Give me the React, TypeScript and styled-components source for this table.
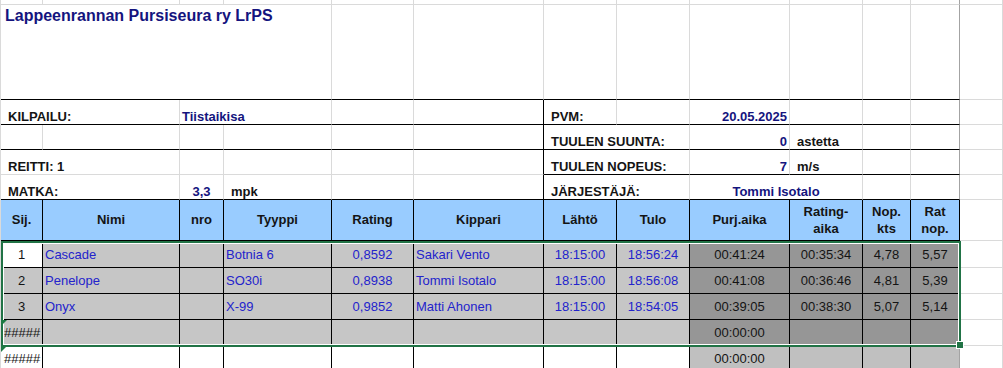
import React from "react";
import styled, { createGlobalStyle } from "styled-components";

const GlobalStyle = createGlobalStyle`
  html, body {
    margin: 0;
    padding: 0;
    background: #ffffff;
    overflow: hidden;
  }
  body {
    font-family: "Liberation Sans", Arial, sans-serif;
  }
`;

const GRID = "#dadada";
const BLACK = "#000000";
const EDGE = "#a3a3a3";
const NAVY = "#14147e";
const BLUE = "#2323cc";
const INK = "#141414";
const HEAD_BG = "#99ccff";
const SEL_LIGHT = "#c6c6c6";
const SEL_DARK = "#969696";
const CALC_BG = "#c0c0c0";
const EXCEL_GREEN = "#217346";

const Sheet = styled.div`
  position: relative;
  display: grid;
  grid-template-columns: 42px 137px 44px 108px 82px 130px 73px 73px 100px 73px 48px 49px 43px;
  grid-template-rows: 5px 95px 25px 25px 25px 25px 41px 27px 26px 26px 26px 26px;
  width: 1002px;
  border-left: 1px solid ${GRID};
  font-family: "Liberation Sans", Arial, sans-serif;
  font-size: 13px;
`;

type CellProps = {
  $span?: number;
  $bg?: string;
  $r?: string;
  $b?: string;
  $align?: "left" | "center" | "right";
  $v?: "top" | "center" | "bottom";
  $bold?: boolean;
  $color?: string;
  $indent?: number;
};

const justify = { left: "flex-start", center: "center", right: "flex-end" };
const valign = { top: "flex-start", center: "center", bottom: "flex-end" };

const Cell = styled.div<CellProps>`
  position: relative;
  grid-column: span ${(p) => p.$span ?? 1};
  box-sizing: border-box;
  min-width: 0;
  display: flex;
  justify-content: ${(p) => justify[p.$align ?? "left"]};
  align-items: ${(p) => valign[p.$v ?? "center"]};
  padding: 0 2px 0 ${(p) => p.$indent ?? 2}px;
  background: ${(p) => p.$bg ?? "#ffffff"};
  border-right: 1px solid ${(p) => p.$r ?? GRID};
  border-bottom: 1px solid ${(p) => p.$b ?? GRID};
  color: ${(p) => p.$color ?? INK};
  font-weight: ${(p) => (p.$bold ? 700 : 400)};
  line-height: 15px;
  white-space: nowrap;
`;

const Title = styled(Cell)`
  font-size: 16px;
  line-height: 18px;
  padding-top: 2px;
  padding-left: 4px;
  color: ${NAVY};
`;

const HeadCell = styled(Cell)`
  background: ${HEAD_BG};
  border-right-color: ${BLACK};
  border-bottom-color: ${BLACK};
  font-weight: 700;
  line-height: 16.5px;
  padding-top: 1px;
`;

const HeadText = styled.span`
  display: block;
  text-align: center;
`;

const ErrorMark = styled.span`
  position: absolute;
  left: 0;
  top: 0;
  z-index: 3;
  width: 0;
  height: 0;
  border-top: 6px solid #1e7a44;
  border-right: 6px solid transparent;
`;

const Selection = styled.div`
  position: absolute;
  z-index: 1;
  left: 0;
  top: 241px;
  width: 960px;
  height: 106px;
  box-sizing: border-box;
  border: 2px solid ${EXCEL_GREEN};
  box-shadow: inset 0 0 0 1px #ffffff;
  pointer-events: none;
`;

const FillHandle = styled.div`
  position: absolute;
  z-index: 2;
  left: 955px;
  top: 341px;
  width: 6px;
  height: 6px;
  background: ${EXCEL_GREEN};
  border: 1px solid #ffffff;
  pointer-events: none;
`;

type Row = {
  sij: string;
  nimi: string;
  tyyppi: string;
  rating: string;
  kippari: string;
  lahto: string;
  tulo: string;
  purj: string;
  ra: string;
  nop: string;
  rat: string;
  err?: boolean;
  selected: boolean;
};

const rows: Row[] = [
  { sij: "1", nimi: "Cascade", tyyppi: "Botnia 6", rating: "0,8592", kippari: "Sakari Vento", lahto: "18:15:00", tulo: "18:56:24", purj: "00:41:24", ra: "00:35:34", nop: "4,78", rat: "5,57", selected: true },
  { sij: "2", nimi: "Penelope", tyyppi: "SO30i", rating: "0,8938", kippari: "Tommi Isotalo", lahto: "18:15:00", tulo: "18:56:08", purj: "00:41:08", ra: "00:36:46", nop: "4,81", rat: "5,39", selected: true },
  { sij: "3", nimi: "Onyx", tyyppi: "X-99", rating: "0,9852", kippari: "Matti Ahonen", lahto: "18:15:00", tulo: "18:54:05", purj: "00:39:05", ra: "00:38:30", nop: "5,07", rat: "5,14", selected: true },
  { sij: "#####", nimi: "", tyyppi: "", rating: "", kippari: "", lahto: "", tulo: "", purj: "00:00:00", ra: "", nop: "", rat: "", err: true, selected: true },
  { sij: "#####", nimi: "", tyyppi: "", rating: "", kippari: "", lahto: "", tulo: "", purj: "00:00:00", ra: "", nop: "", rat: "", err: true, selected: false },
];

const headers: string[][] = [
  ["Sij."],
  ["Nimi"],
  ["nro"],
  ["Tyyppi"],
  ["Rating"],
  ["Kippari"],
  ["Lähtö"],
  ["Tulo"],
  ["Purj.aika"],
  ["Rating-", "aika"],
  ["Nop.", "kts"],
  ["Rat", "nop."],
];

function DataRow({ row, index }: { row: Row; index: number }) {
  const light = row.selected ? SEL_LIGHT : "#ffffff";
  const dark = row.selected ? SEL_DARK : CALC_BG;
  const first = index === 0 ? "#ffffff" : light;
  return (
    <>
      <Cell $bg={first} $r={BLACK} $b={BLACK} $align={row.err ? "left" : "center"} $indent={row.err ? 3 : 2}>
        {row.err && <ErrorMark />}
        {row.sij}
      </Cell>
      <Cell $bg={light} $r={BLACK} $b={BLACK} $color={BLUE}>{row.nimi}</Cell>
      <Cell $bg={light} $r={BLACK} $b={BLACK} />
      <Cell $bg={light} $r={BLACK} $b={BLACK} $color={BLUE}>{row.tyyppi}</Cell>
      <Cell $bg={light} $r={BLACK} $b={BLACK} $color={BLUE} $align="center">{row.rating}</Cell>
      <Cell $bg={light} $r={BLACK} $b={BLACK} $color={BLUE}>{row.kippari}</Cell>
      <Cell $bg={light} $r={BLACK} $b={BLACK} $color={BLUE} $align="center">{row.lahto}</Cell>
      <Cell $bg={light} $r={BLACK} $b={BLACK} $color={BLUE} $align="center">{row.tulo}</Cell>
      <Cell $bg={dark} $r={BLACK} $b={BLACK} $align="center">{row.purj}</Cell>
      <Cell $bg={dark} $r={BLACK} $b={BLACK} $align="center">{row.ra}</Cell>
      <Cell $bg={dark} $r={BLACK} $b={BLACK} $align="center">{row.nop}</Cell>
      <Cell $bg={dark} $r={EDGE} $b={BLACK} $align="center">{row.rat}</Cell>
      <Cell />
    </>
  );
}

export default function App() {
  const blanks = (n: number, props: CellProps = {}) =>
    Array.from({ length: n }, (_, i) => <Cell key={i} {...props} />);

  return (
    <>
      <GlobalStyle />
      <Sheet>
        {/* thin top row */}
        {blanks(11)}
        <Cell $r={EDGE} />
        <Cell />

        {/* title row */}
        <Title $span={4} $v="top" $b={BLACK} $bold>
          Lappeenrannan Pursiseura ry LrPS
        </Title>
        {blanks(7, { $b: BLACK })}
        <Cell $b={BLACK} $r={EDGE} />
        <Cell />

        {/* KILPAILU / PVM */}
        <Cell $span={2} $v="bottom" $b={BLACK} $bold $indent={7}>KILPAILU:</Cell>
        <Cell $span={2} $v="bottom" $b={BLACK} $bold $color={NAVY}>Tiistaikisa</Cell>
        <Cell $b={BLACK} />
        <Cell $b={BLACK} $r={BLACK} />
        <Cell $v="bottom" $b={BLACK} $bold $indent={7}>PVM:</Cell>
        <Cell $b={BLACK} />
        <Cell $v="bottom" $align="right" $b={BLACK} $bold $color={NAVY}>20.05.2025</Cell>
        <Cell $b={BLACK} />
        <Cell $b={BLACK} />
        <Cell $b={BLACK} $r={EDGE} />
        <Cell />

        {/* blank / TUULEN SUUNTA */}
        {blanks(5, { $b: BLACK })}
        <Cell $b={BLACK} $r={BLACK} />
        <Cell $span={2} $v="bottom" $b={BLACK} $bold $indent={7}>TUULEN SUUNTA:</Cell>
        <Cell $v="bottom" $align="right" $b={BLACK} $bold $color={NAVY}>0</Cell>
        <Cell $v="bottom" $b={BLACK} $bold $indent={7}>astetta</Cell>
        <Cell $b={BLACK} />
        <Cell $b={BLACK} $r={EDGE} />
        <Cell />

        {/* REITTI / TUULEN NOPEUS */}
        <Cell $span={2} $v="bottom" $bold $indent={7}>REITTI: 1</Cell>
        <Cell />
        <Cell />
        <Cell />
        <Cell $r={BLACK} />
        <Cell $span={2} $v="bottom" $b={BLACK} $bold $indent={7}>TUULEN NOPEUS:</Cell>
        <Cell $v="bottom" $align="right" $b={BLACK} $bold $color={NAVY}>7</Cell>
        <Cell $v="bottom" $b={BLACK} $bold $indent={7}>m/s</Cell>
        <Cell $b={BLACK} />
        <Cell $b={BLACK} $r={EDGE} />
        <Cell />

        {/* MATKA / JÄRJESTÄJÄ */}
        <Cell $span={2} $v="bottom" $b={BLACK} $bold $indent={7}>MATKA:</Cell>
        <Cell $v="bottom" $align="center" $b={BLACK} $bold $color={NAVY}>3,3</Cell>
        <Cell $v="bottom" $b={BLACK} $bold $indent={7}>mpk</Cell>
        <Cell $b={BLACK} />
        <Cell $b={BLACK} $r={BLACK} />
        <Cell $span={2} $v="bottom" $b={BLACK} $bold $indent={7}>JÄRJESTÄJÄ:</Cell>
        <Cell $span={2} $v="bottom" $align="center" $b={BLACK} $bold $color={NAVY}>Tommi Isotalo</Cell>
        <Cell $b={BLACK} />
        <Cell $b={BLACK} $r={EDGE} />
        <Cell />

        {/* header */}
        {headers.map((h, i) => (
          <HeadCell key={h[0]} $align="center" $r={i === 11 ? EDGE : BLACK}>
            <HeadText>
              {h.map((line, j) => (
                <React.Fragment key={line}>
                  {j > 0 && <br />}
                  {line}
                </React.Fragment>
              ))}
            </HeadText>
          </HeadCell>
        ))}
        <Cell />

        {rows.map((row, i) => (
          <DataRow key={i} row={row} index={i} />
        ))}

        <Selection />
        <FillHandle />
      </Sheet>
    </>
  );
}
